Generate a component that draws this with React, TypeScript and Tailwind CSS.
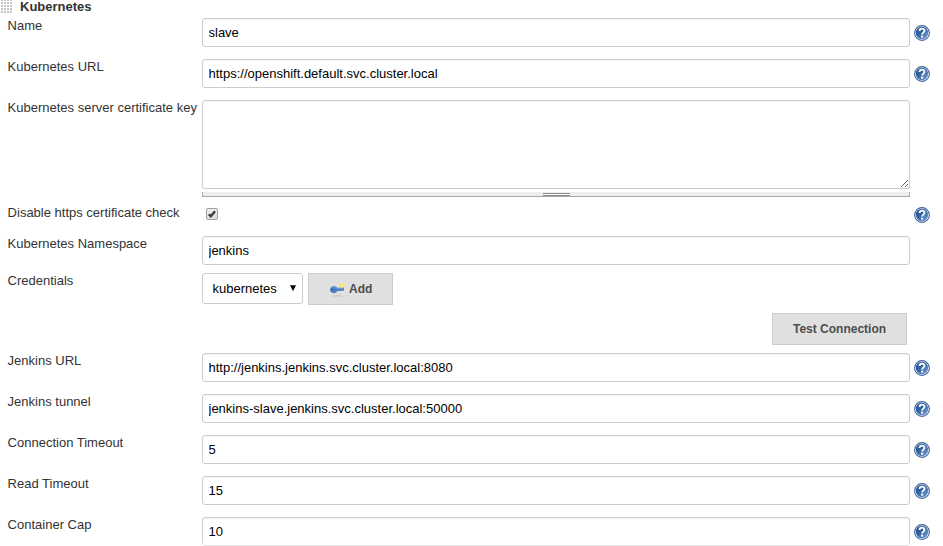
import React from "react";

function HelpIcon() {
  return (
    <svg width="16" height="16" viewBox="0 0 16 16" className="shrink-0">
      <defs>
        <linearGradient id="help" x1="0" y1="0" x2="1" y2="1">
          <stop offset="0" stopColor="#204a87" />
          <stop offset="0.45" stopColor="#3465a4" />
          <stop offset="1" stopColor="#7ea6d6" />
        </linearGradient>
      </defs>
      <circle cx="8" cy="8" r="7.4" fill="#fff" stroke="#3d639c" strokeWidth="1.1" />
      <circle cx="8" cy="8" r="6.2" fill="url(#help)" />
      <path d="M5.5 6.1C5.5 2.9 10.5 2.9 10.5 5.8C10.5 7.6 8.2 7.7 8.1 9.5" fill="none" stroke="#fff" strokeWidth="1.8" />
      <rect x="7.1" y="10.6" width="2" height="2" fill="#fff" />
    </svg>
  );
}

function Label({ children }: { children?: React.ReactNode }) {
  return <div className="w-[194px] shrink-0 whitespace-nowrap leading-[15px] text-[#333]"><span className="-ml-[0.4px]">{children}</span></div>;
}

const box = "box-border w-[708px] shrink-0 rounded-[3px] border border-[#ccc] bg-white shadow-[inset_0_1px_1px_rgba(0,0,0,0.05)] outline-none";

function Field({ label, value, help = true }: { label: string; value: string; help?: boolean }) {
  return (
    <div className="flex h-[29px] shrink-0">
      <Label>{label}</Label>
      <input type="text" defaultValue={value} className={`${box} h-[29px] px-[5.5px] text-black`} />
      {help && <div className="ml-1 mt-[7px]"><HelpIcon /></div>}
    </div>
  );
}

function DragHandle() {
  const cells: React.ReactNode[] = [];
  for (let y = 0; y < 5; y++)
    for (let x = 0; x < 4; x++)
      cells.push(<rect key={`${x}-${y}`} x={x * 3} y={y * 3 - 1} width="2" height="2" fill="#c4c4c4" />);
  return <svg width="12" height="14" viewBox="0 0 12 14">{cells}</svg>;
}

function KeyIcon() {
  return (
    <svg width="16" height="16" viewBox="0 0 16 16" className="shrink-0">
      <ellipse cx="8.5" cy="14.9" rx="5.5" ry="0.6" fill="#c4c4c4" />
      <path d="M4.5 5.2C6.3 5 7.6 5.8 8.2 6.8H15V9.2L13.8 10L12.8 9.4L11.8 10H8.3C7.6 11.6 6.2 12.3 4.4 12.1C2.3 11.8 1 10.4 1 8.7C1 6.8 2.5 5.4 4.5 5.2Z" fill="#4c7fbd" />
      <path d="M3 6.4C4.6 5.5 6.6 6 7.8 7.5H14.5" fill="none" stroke="#75a0d2" strokeWidth="0.8" />
      <circle cx="3.3" cy="8.7" r="0.9" fill="#2b5c99" />
      <circle cx="13.3" cy="4.3" r="2.3" fill="#f6e84c" />
      <circle cx="13.3" cy="4.3" r="0.9" fill="#fffaa8" />
    </svg>
  );
}

export default function App() {
  return (
    <main className="flex h-[546px] w-[943px] flex-col overflow-hidden bg-white font-['Liberation_Sans',Arial,sans-serif] text-[13px]">
      <header className="flex h-[18px] shrink-0 gap-[7px] pl-px">
        <DragHandle />
        <h1 className="mt-[-1px] font-bold leading-[15px] text-[#333]">Kubernetes</h1>
      </header>
      <form className="flex flex-col pl-2">
        <div className="flex flex-col gap-3">
          <Field label="Name" value="slave" />
          <Field label="Kubernetes URL" value="https://openshift.default.svc.cluster.local" />
          <div className="flex h-[97px]">
            <Label>Kubernetes server certificate key</Label>
            <div>
              <textarea className={`${box} block h-[89px] resize-y`} />
              <div className="mt-[3px] flex h-[5px] justify-center border-b border-l border-r border-b-[#aaa] border-l-[#aaa] border-r-[#aaa] bg-[#eee]">
                <div className="mt-px h-[3px] w-[27px] border-y border-[#888a85] bg-white" />
              </div>
            </div>
          </div>
        </div>
        <div className="mt-2 flex h-[31px]">
          <Label>Disable https certificate check</Label>
          <div className="flex w-[708px] pl-1 pt-[3px]">
            <label className="relative h-[13px] w-[13px]">
              <input type="checkbox" defaultChecked className="block h-3 w-3 appearance-none rounded-[2px] border border-[#a0a0a0] bg-linear-to-b from-[#eee] to-[#ddd]" />
              <svg className="absolute left-0 top-0" width="12" height="12" viewBox="0 0 13 13"><path d="M3 6.8L5.2 9L9.8 3.5" fill="none" stroke="#3a3a3a" strokeWidth="2.4" /></svg>
            </label>
          </div>
          <div className="ml-1 mt-0.5"><HelpIcon /></div>
        </div>
        <Field label="Kubernetes Namespace" value="jenkins" help={false} />
        <div className="mt-2 flex h-8">
          <Label>Credentials</Label>
          <button type="button" className="flex h-[31px] w-[101px] items-center justify-between rounded-[3px] border border-[#ccc] pl-[9.5px] pr-[5px] text-black">
            <span>kubernetes</span>
            <svg width="8" height="7" viewBox="0 0 8 7" className="mb-px"><path d="M1 0.3H7L4 6.3Z" /></svg>
          </button>
          <button type="button" className="ml-[5px] flex h-8 w-[85px] items-center border border-[#ccc] bg-[#e0e0e0] pl-5 text-[12px] font-bold text-[#4d4d4d]">
            <KeyIcon /><span className="ml-1">Add</span>
          </button>
        </div>
        <div className="mt-2 flex w-[899px] justify-end">
          <button type="button" className="h-8 w-[135px] border border-[#ccc] bg-[#e0e0e0] text-[12px] font-bold text-[#4d4d4d]">Test Connection</button>
        </div>
        <div className="mt-2 flex flex-col gap-3">
          <Field label="Jenkins URL" value="http://jenkins.jenkins.svc.cluster.local:8080" />
          <Field label="Jenkins tunnel" value="jenkins-slave.jenkins.svc.cluster.local:50000" />
          <Field label="Connection Timeout" value="5" />
          <Field label="Read Timeout" value="15" />
          <Field label="Container Cap" value="10" />
        </div>
      </form>
      <div className="relative -mt-2 h-2 w-full shrink-0 bg-linear-to-b from-white/0 to-white/50" />
    </main>
  );
}
